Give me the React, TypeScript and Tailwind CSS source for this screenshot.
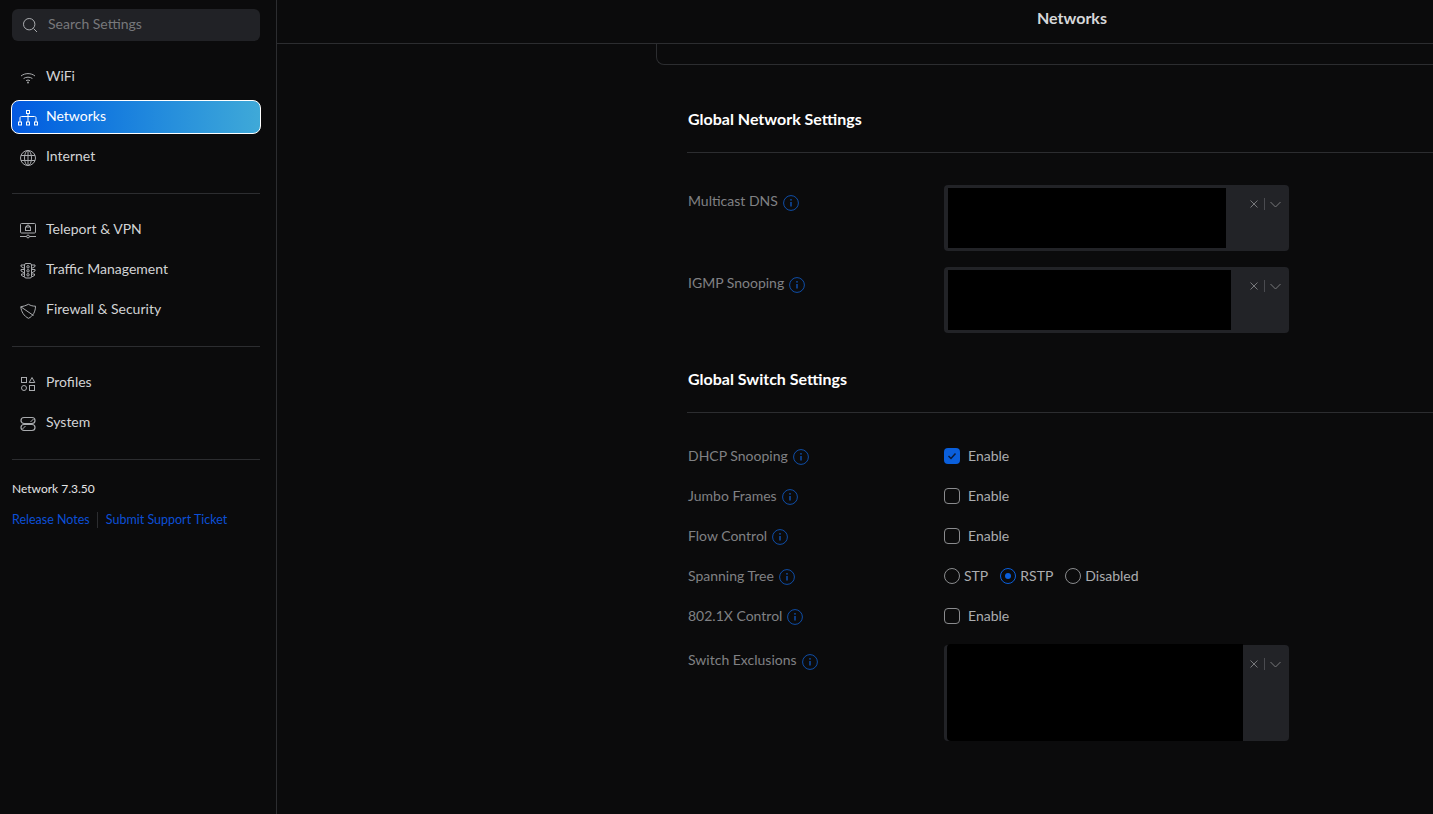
import type { ReactNode } from "react";

function Icon({ children }: { children: ReactNode }) {
  return (
    <svg width="20" height="20" viewBox="0 0 20 20" fill="none" stroke="currentColor" strokeWidth="1">
      {children}
    </svg>
  );
}

const WifiIcon = (
  <Icon>
    <path d="M3 9C7 5.8 13 5.8 17 9" />
    <path d="M5.6 11.5C8.2 9.7 11.8 9.7 14.4 11.5" />
    <path d="M8 13.7C9.2 12.9 10.8 12.9 12 13.7" />
    <circle cx="10" cy="15.5" r="0.9" fill="currentColor" stroke="none" />
  </Icon>
);

const NetworksIcon = (
  <Icon>
    <rect x="8.5" y="3.5" width="3" height="3" />
    <rect x="0.5" y="15" width="3" height="3" />
    <rect x="8.5" y="15" width="3" height="3" />
    <rect x="16.5" y="15" width="3" height="3" />
    <path d="M10 6.5V15M2 15V11C2 10 2.5 9.5 3.5 9.5H16.5C17.5 9.5 18 10 18 11V15" />
  </Icon>
);

const GlobeIcon = (
  <Icon>
    <circle cx="10" cy="11" r="7.5" />
    <ellipse cx="10" cy="11" rx="3.5" ry="7.5" />
    <path d="M10 3.5V18.5M3 8.5H17M3 13.5H17" />
  </Icon>
);

const TeleportIcon = (
  <Icon>
    <rect x="2.5" y="3.5" width="15" height="9.5" rx="1" />
    <rect x="7.5" y="7" width="5" height="3.5" />
    <path d="M8.5 7V6C8.5 4.8 11.5 4.8 11.5 6V7" />
    <path d="M2 16.5H8.5M11.5 16.5H18" />
    <circle cx="10" cy="16.5" r="1.4" />
  </Icon>
);

const TrafficIcon = (
  <Icon>
    <rect x="6.5" y="3.5" width="7" height="14.5" rx="1.5" />
    <circle cx="10" cy="6.8" r="1.2" />
    <circle cx="10" cy="10.8" r="1.2" />
    <circle cx="10" cy="14.8" r="1.2" />
    <path d="M6.5 5H3V6.5L6.5 8.5M6.5 9.5H3V11L6.5 13M6.5 14H3.5V15.5L6.5 17" />
    <path d="M13.5 5H17V6.5L13.5 8.5M13.5 9.5H17V11L13.5 13M13.5 14H16.5V15.5L13.5 17" />
  </Icon>
);

const ShieldIcon = (
  <Icon>
    <path d="M10.5 4.3C12.5 5.6 15 6.2 17.5 6.2C17.5 11.5 15 16.3 10.5 18.3C6 16.3 3.2 11.5 2.8 6.8C5.5 6.3 8 5.6 10.5 4.3Z" />
    <path d="M2.8 6.8L15.5 15.5" />
  </Icon>
);

const ProfilesIcon = (
  <Icon>
    <rect x="3.5" y="4.5" width="5" height="5" />
    <path d="M14 4.5L16.8 9.5H11.2Z" />
    <circle cx="6" cy="15" r="2.5" />
    <rect x="11.5" y="12.5" width="5" height="5" />
  </Icon>
);

const SystemIcon = (
  <Icon>
    <rect x="3" y="4.5" width="14" height="6" rx="3" strokeWidth="1.2" />
    <rect x="3" y="11.5" width="14" height="6" rx="3" strokeWidth="1.2" />
    <path d="M12.5 9L15.5 6M4.5 16L7.5 13" />
  </Icon>
);

function NavItem({ icon, label, active }: { icon: ReactNode; label: string; active?: boolean }) {
  return (
    <div
      className={
        active
          ? "-ml-px flex h-[34px] w-[250px] items-center gap-2 rounded-lg border border-white bg-gradient-to-r from-[#0559e0] to-[#3fa9d8] pl-[6px] text-white"
          : "-ml-px flex h-[34px] w-[250px] items-center gap-2 rounded-lg border border-transparent pl-[6px] text-[#d2d3d5]"
      }
    >
      <span className={active ? "text-white" : "text-[#a9abae]"}>{icon}</span>
      <span className="pb-[4px] text-[14px]">{label}</span>
    </div>
  );
}

function InfoIcon() {
  return (
    <svg width="16" height="16" viewBox="0 0 16 16" fill="none" className="mt-[2px] text-[#0f4ea8]">
      <circle cx="8" cy="8" r="7.4" stroke="currentColor" />
      <circle cx="8" cy="4.8" r="0.9" fill="currentColor" />
      <path d="M8 7V11.6" stroke="currentColor" strokeWidth="1.5" />
    </svg>
  );
}

function Label({ text }: { text: string }) {
  return (
    <div className="flex w-[257px] shrink-0 items-center gap-[5px] pl-px text-[14px] text-[#808184]">
      <span className="pb-[2px]">{text}</span>
      <InfoIcon />
    </div>
  );
}

function SelectBox({ height, mask }: { height: string; mask: ReactNode }) {
  return (
    <div className={`flex w-[345px] rounded bg-[#222327] ${height}`}>
      {mask}
      <div className="ml-auto flex h-[38px] w-[46px] items-center justify-end gap-[5px] pr-[8px] text-[#77787b]">
        <svg width="10" height="10" viewBox="0 0 10 10" stroke="currentColor" fill="none">
          <path d="M1.5 1.5L8.5 8.5M8.5 1.5L1.5 8.5" />
        </svg>
        <span className="h-[12px] w-px bg-[#4a4b50]" />
        <svg width="11" height="7" viewBox="0 0 11 7" stroke="currentColor" fill="none">
          <path d="M0.5 1L5.5 6L10.5 1" />
        </svg>
      </div>
    </div>
  );
}

function Checkbox({ checked }: { checked?: boolean }) {
  return (
    <div className="flex items-center gap-2 text-[14px] text-[#acadb0]">
      {checked ? (
        <span className="flex h-4 w-4 items-center justify-center rounded-[4px] bg-[#0a5fdc]">
          <svg width="10" height="8" viewBox="0 0 10 8" fill="none" stroke="#0c1c3a" strokeWidth="1.5">
            <path d="M1.5 4L4 6.5L8.5 1.5" />
          </svg>
        </span>
      ) : (
        <span className="h-4 w-4 rounded-[4px] border border-[#8a8b8e]" />
      )}
      <span className="pb-[2px]">Enable</span>
    </div>
  );
}

function Radio({ label, checked }: { label: string; checked?: boolean }) {
  return (
    <div className="flex items-center gap-[4px] text-[14px] text-[#acadb0]">
      {checked ? (
        <span className="flex h-4 w-4 items-center justify-center rounded-full border border-[#0a5fdc]">
          <span className="h-[6px] w-[6px] rounded-full bg-[#0a5fdc]" />
        </span>
      ) : (
        <span className="h-4 w-4 rounded-full border border-[#8a8b8e]" />
      )}
      <span className="pb-[2px]">{label}</span>
    </div>
  );
}

function SwitchRow({ label, children }: { label: string; children: ReactNode }) {
  return (
    <div className="flex h-10 items-center">
      <Label text={label} />
      {children}
    </div>
  );
}

export default function App() {
  return (
    <div className="flex h-[814px] overflow-hidden bg-[#0b0b0c] font-['Lato',sans-serif]">
      <aside className="w-[277px] shrink-0 border-r border-[#2c2d30] pt-[9px] pr-4 pl-3">
        <div className="flex h-8 items-center gap-[10px] rounded-md bg-[#212226] pl-[10px] text-[14px] text-[#77787b]">
          <svg width="16" height="16" viewBox="0 0 16 16" fill="none" stroke="#a9abae">
            <circle cx="7.2" cy="7.2" r="5.7" />
            <path d="M11.5 11.5L15 15" />
          </svg>
          <span className="pb-[4px]">Search Settings</span>
        </div>

        <nav className="mt-[19px] flex flex-col gap-[6px]">
          <NavItem icon={WifiIcon} label="WiFi" />
          <NavItem icon={NetworksIcon} label="Networks" active />
          <NavItem icon={GlobeIcon} label="Internet" />
        </nav>
        <div className="my-[19px] h-px bg-[#2c2d30]" />
        <nav className="flex flex-col gap-[6px]">
          <NavItem icon={TeleportIcon} label="Teleport & VPN" />
          <NavItem icon={TrafficIcon} label="Traffic Management" />
          <NavItem icon={ShieldIcon} label="Firewall & Security" />
        </nav>
        <div className="my-[19px] h-px bg-[#2c2d30]" />
        <nav className="flex flex-col gap-[6px]">
          <NavItem icon={ProfilesIcon} label="Profiles" />
          <NavItem icon={SystemIcon} label="System" />
        </nav>
        <div className="mt-[19px] h-px bg-[#2c2d30]" />

        <div className="mt-[21px] text-[12px] leading-[16px] text-[#e4e4e5]">Network 7.3.50</div>
        <div className="mt-[15px] flex items-center text-[12.5px] leading-[16px] text-[#0c4fd6]">
          <span>Release Notes</span>
          <span className="mr-2 ml-[7px] h-4 w-px bg-[#2c2d30]" />
          <span>Submit Support Ticket</span>
        </div>
      </aside>

      <main className="min-w-0 flex-1">
        <header className="flex h-[44px] items-center justify-center border-b border-[#2c2d30] pb-[8px] pl-[434px] text-[16px] font-bold text-[#d6d7d9]">
          Networks
        </header>

        <div className="pl-[379px]">
          <div className="h-[21px] rounded-bl-lg border-b border-l border-[#2c2d30]" />

          <div className="pl-[31px]">
            <h2 className="mt-[44px] pl-px text-[16px] leading-[20px] font-bold text-white">Global Network Settings</h2>
            <div className="mt-[23px] h-px bg-[#2c2d30]" />

            <div className="mt-[32px] flex flex-col gap-4">
              <div className="flex">
                <div className="pt-[5px]">
                  <Label text="Multicast DNS" />
                </div>
                <SelectBox height="h-[66px]" mask={<div className="my-[3px] ml-[4px] w-[278px] bg-black" />} />
              </div>
              <div className="flex">
                <div className="pt-[5px]">
                  <Label text="IGMP Snooping" />
                </div>
                <SelectBox height="h-[66px]" mask={<div className="my-[3px] ml-[4px] w-[283px] bg-black" />} />
              </div>
            </div>

            <h2 className="mt-[36px] pl-px text-[16px] leading-[20px] font-bold text-white">Global Switch Settings</h2>
            <div className="mt-[23px] h-px bg-[#2c2d30]" />

            <div className="mt-[23px]">
              <SwitchRow label="DHCP Snooping">
                <Checkbox checked />
              </SwitchRow>
              <SwitchRow label="Jumbo Frames">
                <Checkbox />
              </SwitchRow>
              <SwitchRow label="Flow Control">
                <Checkbox />
              </SwitchRow>
              <SwitchRow label="Spanning Tree">
                <div className="flex items-center gap-3">
                  <Radio label="STP" />
                  <Radio label="RSTP" checked />
                  <Radio label="Disabled" />
                </div>
              </SwitchRow>
              <SwitchRow label="802.1X Control">
                <Checkbox />
              </SwitchRow>
            </div>

            <div className="mt-[9px] flex">
              <div className="pt-[4px]">
                <Label text="Switch Exclusions" />
              </div>
              <SelectBox
                height="h-[96px]"
                mask={<div className="-mt-px ml-[3px] h-[97px] w-[296px] rounded-l bg-black" />}
              />
            </div>
          </div>
        </div>
      </main>
    </div>
  );
}
